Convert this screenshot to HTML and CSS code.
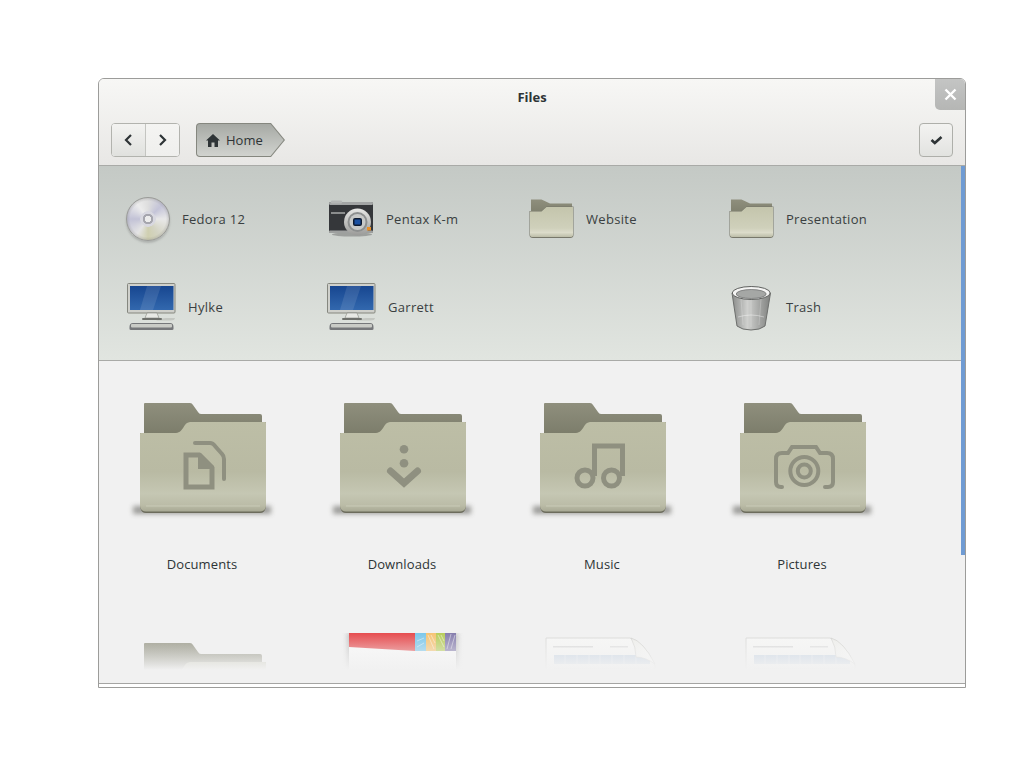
FILE: index.html
```html
<!DOCTYPE html>
<html>

<head>
    <meta charset="utf-8">
    <title>Files</title>
    <link rel="stylesheet" href="styles.css">
</head>

<body>
    <!-- shared gradients and icons -->
    <svg class="iconDefs" aria-hidden="true">
        <defs>
            <linearGradient id="folderBack" x1="0" y1="0" x2="0" y2="1">
                <stop offset="0" stop-color="#8f8f7d" />
                <stop offset="1" stop-color="#7a7b69" />
            </linearGradient>
            <linearGradient id="folderFront" x1="0" y1="0" x2="0" y2="1">
                <stop offset="0" stop-color="#bdbea6" />
                <stop offset="0.55" stop-color="#b9baa3" />
                <stop offset="0.8" stop-color="#c5c7b3" />
                <stop offset="0.93" stop-color="#bbbca7" />
                <stop offset="1" stop-color="#a8a994" />
            </linearGradient>
            <linearGradient id="smallFront" x1="0" y1="0" x2="0" y2="1">
                <stop offset="0" stop-color="#c4c5ac" />
                <stop offset="0.7" stop-color="#cfd0bb" />
                <stop offset="0.85" stop-color="#dcdcca" />
                <stop offset="1" stop-color="#bcbda8" />
            </linearGradient>
            <linearGradient id="screenBlue" x1="0" y1="0" x2="0" y2="1">
                <stop offset="0" stop-color="#174690" />
                <stop offset="1" stop-color="#3268ae" />
            </linearGradient>
            <linearGradient id="metal" x1="0" y1="0" x2="0" y2="1">
                <stop offset="0" stop-color="#e8e8e6" />
                <stop offset="1" stop-color="#9a9a98" />
            </linearGradient>
            <linearGradient id="binBody" x1="0" y1="0" x2="1" y2="0">
                <stop offset="0" stop-color="#8a8c8a" />
                <stop offset="0.4" stop-color="#cfd0ce" />
                <stop offset="1" stop-color="#7f817f" />
            </linearGradient>
            <linearGradient id="curl" x1="0" y1="0" x2="1" y2="1">
                <stop offset="0" stop-color="#ecece8" />
                <stop offset="1" stop-color="#ffffff" />
            </linearGradient>
            <filter id="softBlur" x="-20%" y="-100%" width="140%" height="300%">
                <feGaussianBlur stdDeviation="2.500" />
            </filter>

            <symbol id="folderBig" viewBox="0 0 160 130">
                <rect x="11" y="113" width="138" height="8" fill="#4a4a42" opacity="0.5" filter="url(#softBlur)" />
                <path d="M22 11Q22 10 23 10H68Q70 10 71 12L76 19Q77 21 79 21H138Q140 21 140 23V44H22Z" fill="url(#folderBack)" />
                <path d="M18 40H52C57 40 59 38 61 35C63 31 65 29 68 29H143Q144 29 144 30V112C144 117 142 120 138 120H24C20 120 18 117 18 112V41Q18 40 19 40Z" fill="#6c6c5c" />
                <path d="M18 40H52C57 40 59 38 61 35C63 31 65 29 68 29H143Q144 29 144 30V112C144 116 142 118.500 138 118.500H24C20 118.500 18 116 18 112V41Q18 40 19 40Z" fill="url(#folderFront)" />
                <path d="M24 113H138" stroke="#d0d1be" stroke-width="1" opacity="0.7" />
            </symbol>

            <symbol id="folderSmall" viewBox="0 0 48 48">
                <path d="M5 4.500H15.500L24 8.500H46V22H5Z" fill="url(#folderBack)" />
                <path d="M3.500 16H15.500L20.500 11.500H47.500V40Q47.500 43 44 43H7Q3.500 43 3.500 40Z" fill="#77776a" />
                <path d="M4 16.500H15.500L20.500 12H47V40Q47 42 44 42H7Q4 42 4 40Z" fill="url(#smallFront)" />
            </symbol>

            <symbol id="computer" viewBox="0 0 50 48">
                <path d="M30 37.500H44Q49 37.500 49 35H40Q34 35 30 37.500Z" fill="#c4c7c2" />
                <rect x="1.500" y="0.500" width="47.500" height="29.500" rx="1" fill="#cfd0cb" stroke="#85877f" />
                <rect x="4" y="3" width="43.500" height="24" fill="url(#screenBlue)" />
                <path d="M21 3H35L27 27H14Z" fill="#fff" opacity="0.1" />
                <path d="M21 30H31L33 35H19Z" fill="#e8e9e5" stroke="#85877f" stroke-width="0.600" />
                <rect x="16" y="35" width="20" height="2" rx="1" fill="#6e706c" />
                <path d="M3.500 46V44Q3.500 40 7 40H44Q47.500 40 47.500 44V46Q47.500 47 46 47H5Q3.500 47 3.500 46Z" fill="#75777a" />
                <rect x="5" y="41" width="41" height="3.500" rx="1" fill="#c9cbc6" />
            </symbol>

            <symbol id="sheetPage" viewBox="0 0 160 130">
                <path d="M24 5H108Q122 8 133 32V60H24Z" fill="#f7f7f6" stroke="#d8d8d5" />
                <rect x="31" y="13" width="40" height="1.500" fill="#d8d8d8" />
                <rect x="88" y="13" width="18" height="1.500" fill="#dedede" />
                <rect x="32" y="22" width="96" height="9" fill="#c3d2e4" />
                <path d="M43 22V31M55 22V31M67 22V31M78 22V31M90 22V31M102 22V31M114 22V31" stroke="#dbe4ee" />
                <path d="M32 36H128" stroke="#d9d9d6" />
                <path d="M109 5Q121 8 133 31Q123 24 114 24Q114 14 109 5Z" fill="url(#curl)" stroke="#c8c8c4" stroke-width="0.600" />
            </symbol>
        </defs>
    </svg>

    <div class="window">
        <div class="header">
            <div class="title">Files</div>
            <div class="toolbar">
                <div class="navGroup">
                    <button class="navBtn navBack">
                        <svg width="10" height="14" viewBox="0 0 10 14"><path d="M7 2L2 7L7 12" fill="none" stroke="#2e3436" stroke-width="2.200" /></svg>
                    </button>
                    <button class="navBtn">
                        <svg width="10" height="14" viewBox="0 0 10 14"><path d="M2 2L7 7L2 12" fill="none" stroke="#2e3436" stroke-width="2.200" /></svg>
                    </button>
                </div>
                <div class="crumb">
                    <svg width="14" height="13" viewBox="0 0 14 13"><path d="M7 0L14 6.500H12V13H8.500V8.500H5.500V13H2V6.500H0Z" fill="#2e3436" /></svg>
                    <span>Home</span>
                </div>
                <button class="selectBtn">
                    <svg width="13" height="10" viewBox="0 0 13 10"><path d="M1.500 5L4.800 8L11.500 2" fill="none" stroke="#2e3436" stroke-width="2.600" /></svg>
                </button>
            </div>
        </div>

        <div class="places">
            <div class="place">
                <div class="disc"></div>
                <span>Fedora 12</span>
            </div>
            <div class="place">
                <svg class="placeIcon" viewBox="0 0 48 48">
                    <ellipse cx="26" cy="39.500" rx="20" ry="2" fill="#555" opacity="0.4" />
                    <rect x="3" y="7" width="44" height="31" rx="2" fill="#35373a" />
                    <rect x="3" y="7" width="44" height="3" rx="1.500" fill="#a3a5a5" />
                    <rect x="5" y="5.500" width="11" height="3" rx="1" fill="#b5b7b6" />
                    <rect x="5" y="17" width="14" height="2" fill="#8b8d8d" />
                    <rect x="3" y="35.500" width="44" height="2.500" rx="1" fill="#9ea09f" />
                    <circle cx="31.500" cy="27" r="13.500" fill="url(#metal)" />
                    <circle cx="31.500" cy="27" r="10" fill="#8d8f8f" />
                    <circle cx="31.500" cy="27" r="8" fill="#c8c9c8" />
                    <rect x="27" y="23" width="9" height="8" rx="2" fill="#0e1a30" />
                    <rect x="28.500" y="24.500" width="6" height="5" fill="#1a4fa0" />
                    <rect x="41" y="32" width="4" height="3.500" fill="#e8902a" />
                </svg>
                <span>Pentax K-m</span>
            </div>
            <div class="place">
                <svg class="placeIcon"><use href="#folderSmall" /></svg>
                <span>Website</span>
            </div>
            <div class="place">
                <svg class="placeIcon"><use href="#folderSmall" /></svg>
                <span>Presentation</span>
            </div>
            <div class="place">
                <svg class="placeIcon computerIcon"><use href="#computer" /></svg>
                <span>Hylke</span>
            </div>
            <div class="place">
                <svg class="placeIcon computerIcon"><use href="#computer" /></svg>
                <span>Garrett</span>
            </div>
            <div class="place trashPlace">
                <svg class="placeIcon" viewBox="0 0 48 48">
                    <path d="M6 10L11 43Q16 47 25 47Q34 47 39 43L44.500 10Z" fill="url(#binBody)" stroke="#6d6f6d" />
                    <path d="M15 16L17 42M25 17V44M35 16L33 42" stroke="#fff" stroke-opacity="0.2" fill="none" />
                    <path d="M12 34Q25 30 38 34" stroke="#fff" stroke-opacity="0.4" fill="none" />
                    <ellipse cx="25.200" cy="10" rx="19" ry="6.500" fill="#f4f4f3" stroke="#5f615f" />
                    <ellipse cx="25.200" cy="11" rx="15" ry="4.500" fill="#a5a7a5" stroke="#676969" stroke-width="0.700" />
                </svg>
                <span>Trash</span>
            </div>
        </div>

        <div class="files">
            <div class="fileGrid">
                <div class="file">
                    <svg class="fileIcon" viewBox="0 0 160 130">
                        <use href="#folderBig" width="160" height="130" />
                        <path d="M64 62H77L90 75V94H64Z" fill="none" stroke="#8f9080" stroke-width="5" />
                        <path d="M76 60H79L92 73V76H76Z" fill="#8f9080" />
                        <path d="M73 50H88Q91 50 93 53L100 61Q102 63 102 66V86" fill="none" stroke="#8f9080" stroke-width="4" stroke-linecap="round" />
                    </svg>
                    <div class="fileName">Documents</div>
                </div>
                <div class="file">
                    <svg class="fileIcon" viewBox="0 0 160 130">
                        <use href="#folderBig" width="160" height="130" />
                        <circle cx="82" cy="56.300" r="4.300" fill="#8f9080" />
                        <circle cx="82" cy="70.300" r="4.300" fill="#8f9080" />
                        <path d="M68.500 78L82 90L95.500 78" fill="none" stroke="#8f9080" stroke-width="7" stroke-linecap="round" />
                    </svg>
                    <div class="fileName">Downloads</div>
                </div>
                <div class="file">
                    <svg class="fileIcon" viewBox="0 0 160 130">
                        <use href="#folderBig" width="160" height="130" />
                        <circle cx="63" cy="85" r="8" fill="none" stroke="#8f9080" stroke-width="5" />
                        <circle cx="89.500" cy="85" r="8" fill="none" stroke="#8f9080" stroke-width="5" />
                        <path d="M72.500 83V53H100.500V83" fill="none" stroke="#8f9080" stroke-width="5" />
                    </svg>
                    <div class="fileName">Music</div>
                </div>
                <div class="file">
                    <svg class="fileIcon" viewBox="0 0 160 130">
                        <use href="#folderBig" width="160" height="130" />
                        <path d="M60 94H59Q54 94 54 89V66Q54 60 60 60H66L70 54H94L98 60H105Q111 60 111 66V89Q111 94 106 94H103" fill="none" stroke="#8f9080" stroke-width="4" stroke-linecap="round" />
                        <circle cx="82.300" cy="78" r="14" fill="none" stroke="#8f9080" stroke-width="4" />
                        <circle cx="82.300" cy="78" r="6.500" fill="none" stroke="#8f9080" stroke-width="4" />
                    </svg>
                    <div class="fileName">Pictures</div>
                </div>

                <!-- next row is cut off by the fade -->
                <div class="file">
                    <svg class="fileIcon" viewBox="0 0 160 130"><use href="#folderBig" width="160" height="130" /></svg>
                </div>
                <div class="file">
                    <svg class="fileIcon" viewBox="0 0 160 130">
                        <rect x="25" y="0" width="111" height="60" fill="#999" opacity="0.6" filter="url(#softBlur)" />
                        <rect x="27" y="0" width="107" height="60" fill="#fbfbfb" />
                        <path d="M27 0H93V18L27 14Z" fill="#e53f42" />
                        <rect x="93" y="0" width="11" height="18" fill="#72c4ea" />
                        <rect x="104" y="0" width="10" height="18" fill="#f6c069" />
                        <rect x="114" y="0" width="9" height="18" fill="#b3ca4e" />
                        <rect x="123" y="0" width="11" height="18" fill="#7d74a8" />
                        <path d="M95 8L102 5M95 14L102 10M106 2L112 16M109 2L113 10M116 2L122 14M119 2L122 8M125 16L129 1M129 16L133 2" stroke="#fff" stroke-opacity="0.45" fill="none" />
                    </svg>
                </div>
                <div class="file">
                    <svg class="fileIcon" viewBox="0 0 160 130"><use href="#sheetPage" width="160" height="130" /></svg>
                </div>
                <div class="file">
                    <svg class="fileIcon" viewBox="0 0 160 130"><use href="#sheetPage" width="160" height="130" /></svg>
                </div>
            </div>
            <div class="fade"></div>
        </div>

        <div class="footer"></div>

        <button class="closeBtn">
            <svg width="13" height="13" viewBox="0 0 13 13"><path d="M1.500 1.500L11.500 11.500M11.500 1.500L1.500 11.500" stroke="#fff" stroke-width="2.400" /></svg>
        </button>
        <div class="scrollBar"></div>
    </div>
</body>

</html>
```
FILE: styles.css
```css
html,
body {
    height: 100%;
    margin: 0;
}

body {
    background-color: #fff;
    padding: 78px 0 0 98px;
    box-sizing: border-box;
    font-family: "Open Sans", "Noto Sans", sans-serif;
    font-size: 13px;
    color: #2e3436;
}

.iconDefs {
    display: block;
    width: 0;
    height: 0;
}

button {
    padding: 0;
    font: inherit;
    display: flex;
    align-items: center;
    justify-content: center;
}

.window {
    position: relative;
    display: flex;
    flex-direction: column;
    width: 868px;
    height: 610px;
    box-sizing: border-box;
    border: 1px solid #9c9c9a;
    border-radius: 6px 6px 0 0;
    overflow: hidden;
    background-color: #f1f1f1;
}

/* title + toolbar */
.header {
    height: 87px;
    box-sizing: border-box;
    padding: 0 12px;
    background-image: linear-gradient(#f7f7f5, #e8e7e5);
    border-bottom: 1px solid #a9aaa7;
    flex-shrink: 0;
}

.title {
    height: 37px;
    line-height: 37px;
    text-align: center;
    font-weight: bold;
}

.toolbar {
    display: flex;
    align-items: center;
    margin-top: 7px;
}

.navGroup {
    display: flex;
    width: 69px;
    height: 34px;
    box-sizing: border-box;
    border: 1px solid #b2b3ae;
    border-radius: 4px;
    overflow: hidden;
}

.navBtn {
    flex: 1;
    border: none;
    background-image: linear-gradient(#f4f4f2, #efefed);
}

.navBack {
    border-right: 1px solid #c4c5c1;
    background-image: linear-gradient(#f3f3f1, #e0e1de);
}

.crumb {
    position: relative;
    isolation: isolate;
    display: flex;
    align-items: center;
    gap: 6px;
    width: 89px;
    height: 34px;
    box-sizing: border-box;
    margin-left: 16px;
    padding-left: 10px;
    background-color: #85877f;
    clip-path: path("M4 0H75L89 17L75 34H4Q0 34 0 30V4Q0 0 4 0Z");
}

.crumb::before {
    content: "";
    position: absolute;
    inset: 0;
    z-index: -1;
    background-image: linear-gradient(#a5a8a3, #d2d4d0);
    clip-path: path("M4 1H74.500L87.700 17L74.500 33H4Q1 33 1 30V4Q1 1 4 1Z");
}

.selectBtn {
    width: 34px;
    height: 34px;
    margin-left: auto;
    border: 1px solid #aeafaa;
    border-radius: 4px;
    background-image: linear-gradient(#f3f3f1, #e2e3e0);
}

.closeBtn {
    position: absolute;
    top: -1px;
    right: -1px;
    width: 31px;
    height: 32px;
    border: none;
    border-radius: 0 6px 0 5px;
    background-image: linear-gradient(#c4c5c4, #b5b6b4);
}

.scrollBar {
    position: absolute;
    top: 87px;
    right: 0;
    width: 4px;
    height: 389px;
    background-color: #6f9bd3;
}

/* places strip */
.places {
    display: grid;
    grid-template-columns: repeat(4, 200px);
    grid-auto-rows: 88px;
    padding: 9px 0 9px 27px;
    background-image: linear-gradient(#c4c9c5, #e1e5e0);
    border-bottom: 1px solid #a9aaa7;
    flex-shrink: 0;
    letter-spacing: 0.3px;
}

.place {
    display: flex;
    align-items: center;
    gap: 12px;
    color: #3a3f41;
}

.trashPlace {
    grid-column: 4;
}

.placeIcon {
    width: 48px;
    height: 48px;
    flex-shrink: 0;
}

.computerIcon {
    width: 50px;
}

.disc {
    width: 44px;
    height: 44px;
    box-sizing: border-box;
    border-radius: 50%;
    border: 1px solid #9a9b98;
    background-image:
        radial-gradient(circle, #ececec 0 3px, #a6a6ae 3.500px 5px, #d8d8e0 5.500px 7.500px, transparent 8px),
        radial-gradient(circle, transparent 60%, rgba(130, 130, 130, 0.3) 72%),
        conic-gradient(#dedede, #c4c4d8, #e8e8e8 25%, #d4d4c4 40%, #cfcfb0 50%, #e4e4e4 60%, #c2c2d6 75%, #ececec 90%, #dedede);
    box-shadow: 0 2px 2px rgba(80, 80, 80, 0.25);
    flex-shrink: 0;
}

/* file icons */
.files {
    position: relative;
    flex: 1;
    overflow: hidden;
}

.fileGrid {
    display: grid;
    grid-template-columns: repeat(4, 200px);
    grid-auto-rows: 240px;
    padding-left: 3px;
}

.file {
    display: flex;
    flex-direction: column;
    align-items: center;
    padding-top: 32px;
}

.fileIcon {
    width: 160px;
    height: 130px;
}

.fileName {
    margin-top: 33px;
    line-height: 16px;
    letter-spacing: 0.1px;
}

.fade {
    position: absolute;
    left: 0;
    right: 0;
    bottom: 0;
    height: 53px;
    background-image: linear-gradient(rgba(241, 241, 241, 0), #f1f1f1 40px);
}

.footer {
    height: 3px;
    border-top: 1px solid #a5a5a3;
    background-color: #fff;
    flex-shrink: 0;
}
```
